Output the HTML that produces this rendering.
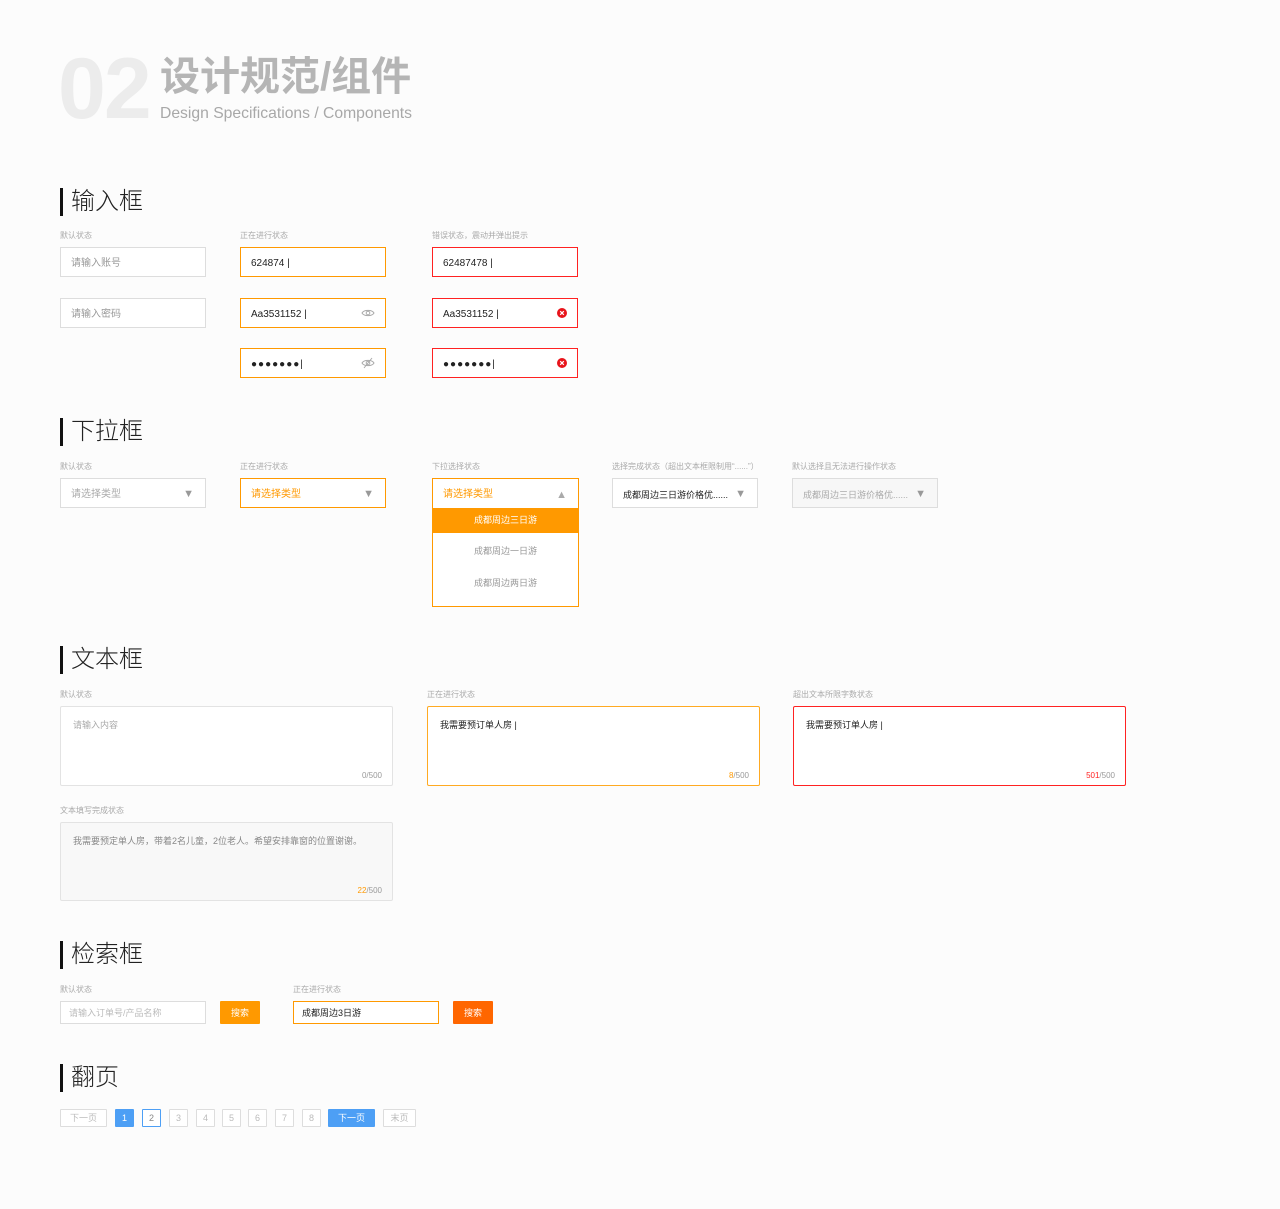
<!DOCTYPE html>
<html><head><meta charset="utf-8">
<style>
*{margin:0;padding:0;box-sizing:border-box}
body{width:1280px;height:1209px;background:#fcfcfc;position:relative;font-family:"Liberation Sans","Noto Sans CJK SC",sans-serif;overflow:hidden}
.a{position:absolute}
.big{left:58px;top:46px;font-size:86px;font-weight:bold;color:#ececec;letter-spacing:-2px;line-height:86px}
.t1{left:160px;top:52px;font-size:40px;font-weight:bold;color:#b5b5b5;line-height:50px}
.t2{left:160px;top:104px;font-size:15.7px;color:#a8a8a8;line-height:20px}
.h{font-size:24px;color:#222;line-height:28px;padding-left:8px;border-left:3px solid #111;left:60px;font-weight:300}
.lb{font-size:8px;color:#aaa;line-height:10px}
.box{width:146px;height:30px;border:1px solid #ddd;background:#fff;font-size:10px;line-height:28px;padding-left:10px;padding-top:2px;color:#999}
.o{border-color:#ff9900;color:#222}
.r{border-color:#f22;color:#222}
.arr{position:absolute;right:11px;top:1px;font-size:11px;color:#999}
.ta{width:333px;height:80px;border:1px solid #e3e3e3;background:#fff;font-size:9px;color:#aaa;padding:11px 12px;border-radius:2px}
.cnt{position:absolute;right:10px;bottom:5px;font-size:8px;color:#999}
.pg{height:18px;border:1px solid #ddd;background:#fff;font-size:9px;color:#bbb;text-align:center;line-height:16px;top:1109px;border-radius:1px}
.ic{position:absolute;right:10px;top:8px}
</style></head><body>
<div class="a big">02</div>
<div class="a t1">设计规范/组件</div>
<div class="a t2">Design Specifications / Components</div>

<div class="a h" style="top:188px">输入框</div>
<div class="a lb" style="left:60px;top:231px">默认状态</div>
<div class="a lb" style="left:240px;top:231px">正在进行状态</div>
<div class="a lb" style="left:432px;top:231px">错误状态，震动并弹出提示</div>
<div class="a box" style="left:60px;top:247px">请输入账号</div>
<div class="a box" style="left:60px;top:298px">请输入密码</div>
<div class="a box o" style="left:240px;top:247px">624874 |</div>
<div class="a box o" style="left:240px;top:298px">Aa3531152 |
<svg class="ic" width="14" height="12" viewBox="0 0 14 12"><path d="M1 6C3 2.5 11 2.5 13 6C11 9.5 3 9.5 1 6Z" fill="none" stroke="#aaa"/><circle cx="7" cy="6" r="1.8" fill="none" stroke="#aaa"/></svg></div>
<div class="a box o" style="left:240px;top:348px;letter-spacing:1px">●●●●●●●|
<svg class="ic" width="14" height="12" viewBox="0 0 14 12"><path d="M1 6C3 2.5 11 2.5 13 6C11 9.5 3 9.5 1 6Z" fill="none" stroke="#aaa"/><circle cx="7" cy="6" r="1.8" fill="none" stroke="#aaa"/><path d="M3 11L11 1" stroke="#aaa"/></svg></div>
<div class="a box r" style="left:432px;top:247px">62487478 |</div>
<div class="a box r" style="left:432px;top:298px">Aa3531152 |
<svg class="ic" style="top:9px" width="10" height="10" viewBox="0 0 10 10"><circle cx="5" cy="5" r="5" fill="#e8141b"/><path d="M3.2 3.2L6.8 6.8M6.8 3.2L3.2 6.8" stroke="#fff" stroke-width="1.2"/></svg></div>
<div class="a box r" style="left:432px;top:348px;letter-spacing:1px">●●●●●●●|
<svg class="ic" style="top:9px" width="10" height="10" viewBox="0 0 10 10"><circle cx="5" cy="5" r="5" fill="#e8141b"/><path d="M3.2 3.2L6.8 6.8M6.8 3.2L3.2 6.8" stroke="#fff" stroke-width="1.2"/></svg></div>

<div class="a h" style="top:418px">下拉框</div>
<div class="a lb" style="left:60px;top:462px">默认状态</div>
<div class="a lb" style="left:240px;top:462px">正在进行状态</div>
<div class="a lb" style="left:432px;top:462px">下拉选择状态</div>
<div class="a lb" style="left:612px;top:462px">选择完成状态（超出文本框限制用“......”）</div>
<div class="a lb" style="left:792px;top:462px">默认选择且无法进行操作状态</div>
<div class="a box" style="left:60px;top:478px;color:#aaa">请选择类型<span class="arr">▼</span></div>
<div class="a box o" style="left:240px;top:478px;color:#ff9900">请选择类型<span class="arr">▼</span></div>
<div class="a" style="left:432px;top:478px;width:147px;height:129px;border:1px solid #ff9900;background:#fff">
 <div style="height:29px;font-size:10px;line-height:31px;padding-left:10px;color:#ff9900;position:relative">请选择类型<span class="arr" style="color:#aaa">▲</span></div>
 <div style="height:25px;background:#ff9900;color:#fff;font-size:9px;text-align:center;line-height:25px">成都周边三日游</div>
 <div style="height:32px;color:#999;font-size:9px;text-align:center;line-height:36px">成都周边一日游</div>
 <div style="height:32px;color:#999;font-size:9px;text-align:center;line-height:36px">成都周边两日游</div>
</div>
<div class="a box" style="left:612px;top:478px;color:#222;font-size:9px">成都周边三日游价格优......<span class="arr">▼</span></div>
<div class="a box" style="left:792px;top:478px;background:#f7f7f7;font-size:9px;color:#aaa">成都周边三日游价格优......<span class="arr">▼</span></div>

<div class="a h" style="top:646px">文本框</div>
<div class="a lb" style="left:60px;top:690px">默认状态</div>
<div class="a lb" style="left:427px;top:690px">正在进行状态</div>
<div class="a lb" style="left:793px;top:690px">超出文本所限字数状态</div>
<div class="a ta" style="left:60px;top:706px">请输入内容<span class="cnt">0/500</span></div>
<div class="a ta" style="left:427px;top:706px;border-color:#ffaa22;color:#222">我需要预订单人房 |<span class="cnt"><span style="color:#ff9900">8</span>/500</span></div>
<div class="a ta" style="left:793px;top:706px;border-color:#f22;color:#222">我需要预订单人房 |<span class="cnt"><span style="color:#f22">501</span>/500</span></div>
<div class="a lb" style="left:60px;top:806px">文本填写完成状态</div>
<div class="a ta" style="left:60px;top:822px;height:79px;background:#f8f8f8;color:#888">我需要预定单人房，带着2名儿童，2位老人。希望安排靠窗的位置谢谢。<span class="cnt"><span style="color:#ff9900">22</span>/500</span></div>

<div class="a h" style="top:941px">检索框</div>
<div class="a lb" style="left:60px;top:985px">默认状态</div>
<div class="a lb" style="left:293px;top:985px">正在进行状态</div>
<div class="a box" style="left:60px;top:1001px;height:23px;line-height:21px;font-size:9px;padding-left:8px;padding-top:1px;color:#bbb">请输入订单号/产品名称</div>
<div class="a" style="left:220px;top:1001px;width:40px;height:23px;background:#ff9900;color:#fff;font-size:9px;text-align:center;line-height:24px;border-radius:1px">搜索</div>
<div class="a box o" style="left:293px;top:1001px;height:23px;line-height:21px;font-size:9px;padding-left:8px;padding-top:1px">成都周边3日游</div>
<div class="a" style="left:453px;top:1001px;width:40px;height:23px;background:#ff6600;color:#fff;font-size:9px;text-align:center;line-height:24px;border-radius:1px">搜索</div>

<div class="a h" style="top:1064px">翻页</div>
<div class="a pg" style="left:60px;width:47px">下一页</div>
<div class="a pg" style="left:115px;width:19px;background:#4d9ff5;border-color:#4d9ff5;color:#fff">1</div>
<div class="a pg" style="left:142px;width:19px;border-color:#4d9ff5;color:#888">2</div>
<div class="a pg" style="left:169px;width:19px">3</div>
<div class="a pg" style="left:196px;width:19px">4</div>
<div class="a pg" style="left:222px;width:19px">5</div>
<div class="a pg" style="left:248px;width:19px">6</div>
<div class="a pg" style="left:275px;width:19px">7</div>
<div class="a pg" style="left:302px;width:19px">8</div>
<div class="a pg" style="left:328px;width:47px;background:#4d9ff5;border-color:#4d9ff5;color:#fff">下一页</div>
<div class="a pg" style="left:383px;width:33px">末页</div>
</body></html>
